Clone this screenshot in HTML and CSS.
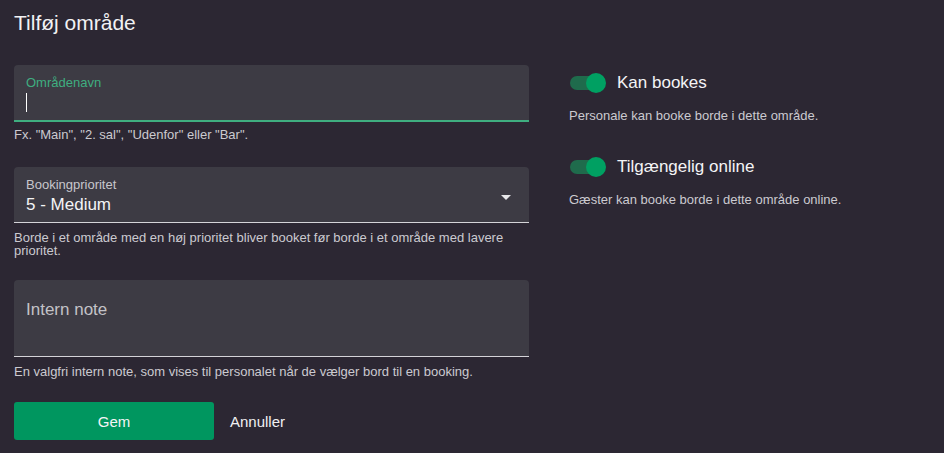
FILE: index.html
```html
<!DOCTYPE html>
<html lang="da">
<head>
<meta charset="utf-8">
<link rel="stylesheet" href="styles.css">
</head>
<body>
<div class="page">
  <h1 class="title">Tilføj område</h1>
  <div class="cols">
    <div class="left">
      <div class="group g1">
        <div class="field focused">
          <div class="label green">Områdenavn</div>
          <div class="value"><span class="caret"></span></div>
        </div>
        <div class="help">Fx. "Main", "2. sal", "Udenfor" eller "Bar".</div>
      </div>
      <div class="group g2">
        <div class="field select">
          <div class="label">Bookingprioritet</div>
          <div class="value">5 - Medium</div>
          <span class="arrow"></span>
        </div>
        <div class="help">Borde i et område med en høj prioritet bliver booket før borde i et område med lavere prioritet.</div>
      </div>
      <div class="group g3">
        <div class="field note">
          <div class="placeholder">Intern note</div>
        </div>
        <div class="help">En valgfri intern note, som vises til personalet når de vælger bord til en booking.</div>
      </div>
      <div class="actions">
        <button class="btn primary">Gem</button>
        <button class="btn text">Annuller</button>
      </div>
    </div>
    <div class="right">
      <div class="switch-row">
        <div class="switch-line">
          <span class="switch"><span class="track"></span><span class="thumb"></span></span>
          <span class="switch-label">Kan bookes</span>
        </div>
        <div class="switch-help">Personale kan booke borde i dette område.</div>
      </div>
      <div class="switch-row">
        <div class="switch-line">
          <span class="switch"><span class="track"></span><span class="thumb"></span></span>
          <span class="switch-label">Tilgængelig online</span>
        </div>
        <div class="switch-help">Gæster kan booke borde i dette område online.</div>
      </div>
    </div>
  </div>
</div>
</body>
</html>
```
FILE: styles.css
```css
* { box-sizing: border-box; }
html, body { margin: 0; padding: 0; }
body {
  background: #2c2733;
  font-family: "Liberation Sans", Arial, sans-serif;
  color: #ffffff;
  width: 944px;
  height: 453px;
  overflow: hidden;
}
.page { padding: 10px 14px 0 14px; }
.title {
  margin: 0;
  font-size: 21px;
  font-weight: 400;
  line-height: 26px;
  color: #f2f2f4;
}
.cols {
  display: flex;
  margin-top: 29px;
}
.left { width: 515px; }
.right { margin-left: 40px; padding-top: 6px; }
.group { margin-bottom: 24px; }
.group.g1 { margin-bottom: 26px; }
.group.g2 { margin-bottom: 23px; }
.field {
  position: relative;
  background: #3d3b44;
  border-radius: 4px 4px 0 0;
  height: 56px;
  padding: 10px 12px 0 12px;
  border-bottom: 1px solid #d4d3d8;
}
.field.focused { height: 57px; border-bottom: 2px solid #3fae80; }
.label {
  font-size: 13px;
  line-height: 15px;
  color: #c8c7cc;
}
.label.green { color: #3fae80; }
.value {
  margin-top: 3px;
  font-size: 17px;
  line-height: 20px;
  color: #f4f4f6;
  height: 20px;
}
.caret {
  display: inline-block;
  width: 1px;
  height: 19px;
  background: #ffffff;
  vertical-align: top;
}
.arrow {
  position: absolute;
  right: 18px;
  top: 28px;
  width: 0; height: 0;
  border-left: 5px solid transparent;
  border-right: 5px solid transparent;
  border-top: 5px solid #e8e8ea;
}
.field.note { height: 77px; padding-top: 20px; }
.placeholder {
  font-size: 17px;
  line-height: 20px;
  color: #c3c2c7;
}
.help {
  margin-top: 6px;
  padding-right: 14px;
  font-size: 13px;
  line-height: 13px;
  color: #cbcad0;
}
.g2 .help, .g3 .help { margin-top: 8px; }
.actions {
  display: flex;
  align-items: center;
}
.btn {
  font-family: "Liberation Sans", Arial, sans-serif;
  font-size: 15px;
  border: none;
  cursor: pointer;
}
.btn.primary {
  width: 200px;
  height: 38px;
  background: #00965f;
  color: #f4f4f6;
  border-radius: 3px;
}
.btn.text {
  background: transparent;
  color: #f0f0f2;
  margin-left: 8px;
  padding: 0 8px;
}
.switch-row { margin-bottom: 32px; }
.switch-line {
  display: flex;
  align-items: center;
  height: 24px;
}
.switch {
  position: relative;
  width: 36px;
  height: 20px;
  margin-left: 1px;
}
.track {
  position: absolute;
  left: 0; top: 3px;
  width: 34px; height: 14px;
  border-radius: 7px;
  background: #1f6b4c;
}
.thumb {
  position: absolute;
  left: 16px; top: 0;
  width: 20px; height: 20px;
  border-radius: 50%;
  background: #00a062;
}
.switch-label {
  margin-left: 11px;
  font-size: 17px;
  color: #f4f4f6;
}
.switch-help {
  margin-top: 13px;
  font-size: 13px;
  line-height: 15px;
  color: #cbcad0;
}
```
